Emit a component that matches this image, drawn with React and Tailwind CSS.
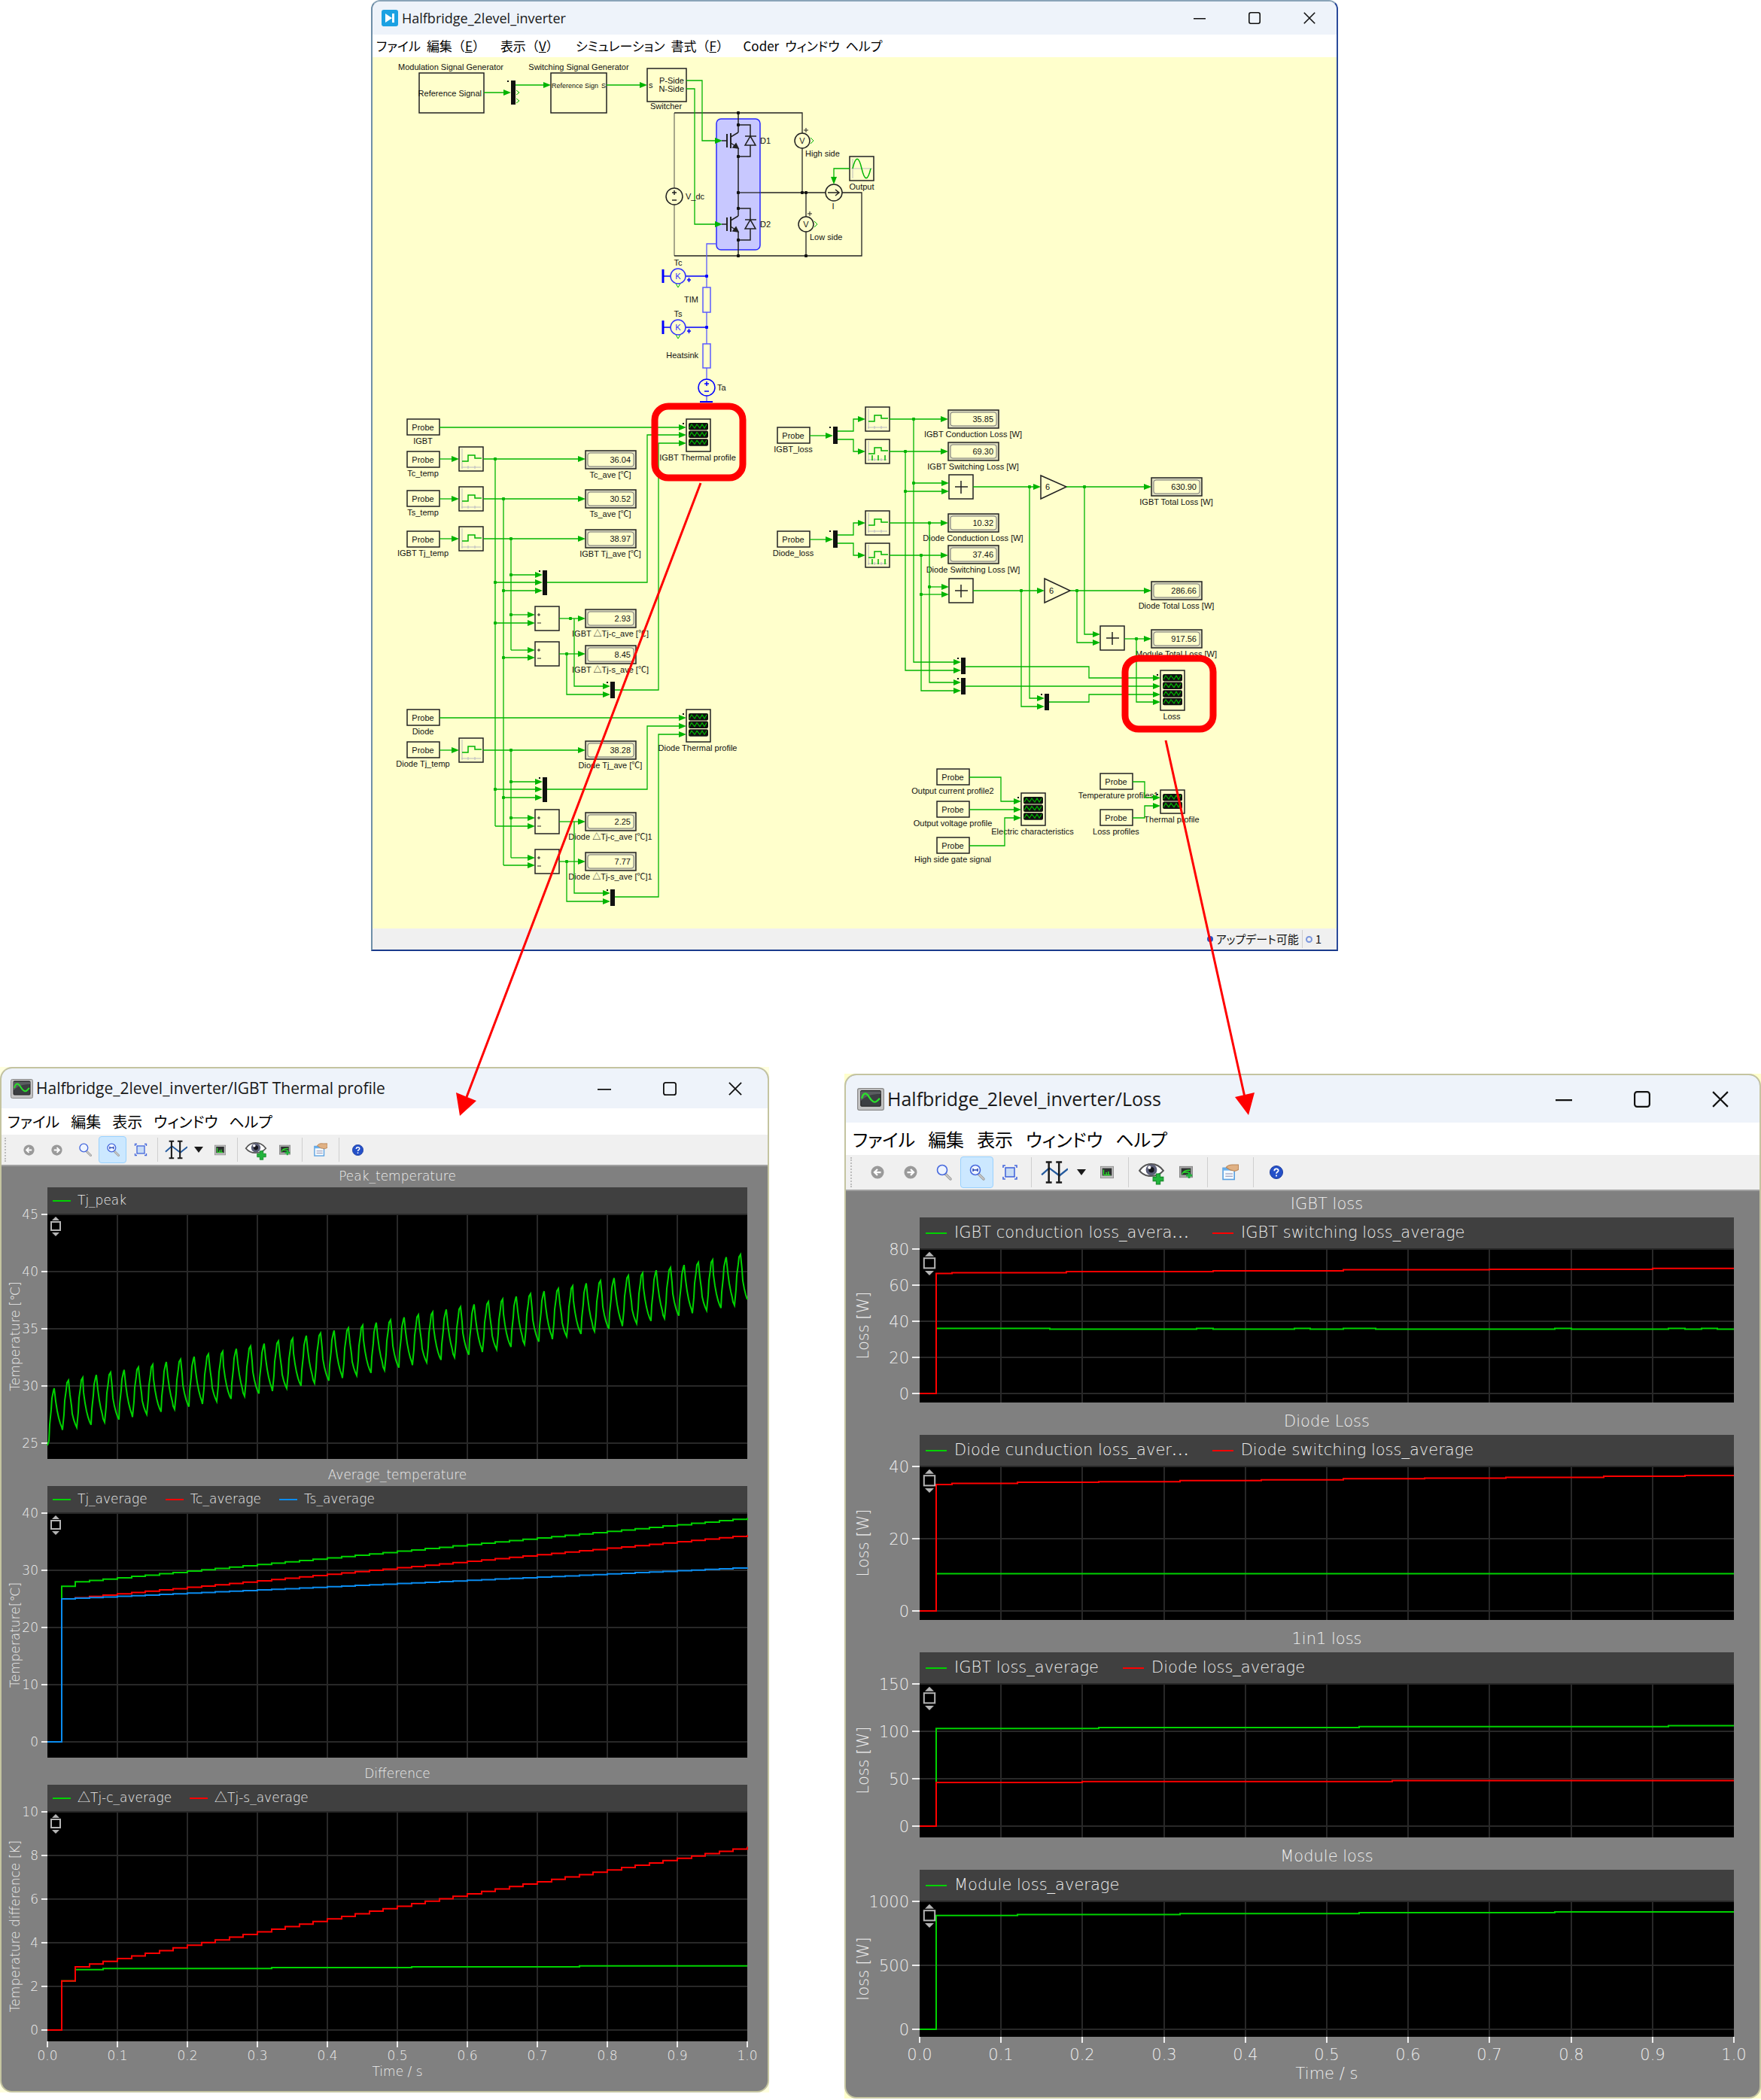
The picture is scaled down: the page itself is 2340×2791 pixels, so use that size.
import React from 'react';

const GREEN = '#00b400';
const BLUE = '#0000ff';
const TIMES = [0, 0.1, 0.2, 0.3, 0.4, 0.5, 0.6, 0.7, 0.8, 0.9, 1];

/* ---------- window chrome ---------- */

function WindowControls({ size, cell }) {
  return (
    <div className="flex items-center">
      <button aria-label="Minimize" className={`${cell} flex justify-center`}>
        <svg className={size} viewBox="0 0 20 20" fill="none" stroke="#111" strokeWidth="2"><path d="M0 11h20" /></svg>
      </button>
      <button aria-label="Maximize" className={`${cell} flex justify-center`}>
        <svg className={size} viewBox="0 0 20 20" fill="none" stroke="#111" strokeWidth="2"><rect x="1" y="1" width="18" height="18" rx="3" /></svg>
      </button>
      <button aria-label="Close" className={`${cell} flex justify-center`}>
        <svg className={size} viewBox="0 0 20 20" fill="none" stroke="#111" strokeWidth="2"><path d="M1 1l18 18M19 1L1 19" /></svg>
      </button>
    </div>
  );
}

function ScopeIcon({ className }) {
  return (
    <svg className={className} viewBox="0 0 30 26" preserveAspectRatio="none">
      <rect x="0.5" y="0.5" width="29" height="25" rx="2" fill="#c4c4c4" stroke="#8a8a8a" />
      <rect x="4" y="3" width="22" height="18" rx="1" fill="#3c3f42" stroke="#222" />
      <path d="M4 11V4h22v3C16 7 10 9 4 15z" fill="#5a5d60" />
      <path d="M5 12C7 5 10 5 13 10s6 8 9 5 2-2 3-3" fill="none" stroke="#2be02b" strokeWidth="2" />
    </svg>
  );
}

/* ---------- scope toolbar ---------- */

const Arrow = ({ flip }) => (
  <svg className="size-1/2" viewBox="0 0 20 20">
    <circle cx="10" cy="10" r="9.5" fill="#9a9a9a" />
    <path d={flip ? 'M5 10h9M10 5.500l4.500 4.500-4.500 4.500' : 'M15 10H6M10 5.500L5.500 10l4.500 4.500'} fill="none" stroke="#fff" strokeWidth="2.500" />
  </svg>
);

const Lens = ({ mark }) => (
  <svg className="size-2/3" viewBox="0 0 24 24" fill="none">
    <path d="M14 14l7 7" stroke="#9a9a9a" strokeWidth="3.500" strokeLinecap="round" />
    <path d="M14 14l7 7" stroke="#d0d0d0" strokeWidth="1.500" strokeLinecap="round" />
    <circle cx="10" cy="9" r="6.500" fill="#eef4ff" stroke="#4668dc" strokeWidth="1.600" />
    {mark && <path d="M7 7v4M13 7v4M7 9h6" stroke="#2846b4" strokeWidth="1.500" />}
  </svg>
);

const FitIcon = () => (
  <svg className="size-2/3" viewBox="0 0 24 24" fill="none" stroke="#4668dc" strokeWidth="1.600">
    <rect x="6" y="6" width="12" height="12" fill="#c8dcf5" />
    <path d="M3 6V3h3M18 3h3v3M21 18v3h-3M6 21H3v-3" />
  </svg>
);

const CursorsIcon = () => (
  <svg className="size-full" viewBox="0 0 32 28" fill="none">
    <path d="M1 17l9-8 12 9 10-8" stroke="#235a9e" strokeWidth="2" />
    <path d="M9.500 2v24M21.500 2v24M6 2h7M18 2h7M6 26h7M18 26h7" stroke="#1a1a1a" strokeWidth="2.200" />
  </svg>
);

const CaretIcon = () => (
  <svg className="h-2 w-3" viewBox="0 0 12 8" preserveAspectRatio="none"><path d="M0 0h12L6 8z" fill="#1a1a1a" /></svg>
);

const SpectrumIcon = () => (
  <svg className="size-1/2" viewBox="0 0 20 20">
    <rect x="0.500" y="1.500" width="19" height="17" fill="#c0c0c0" stroke="#8c8c8c" />
    <rect x="3" y="4" width="14" height="11" fill="#2d3030" />
    <path d="M5 14V6M5 14h10M9 14v-4M12 14V9" stroke="#2be02b" strokeWidth="1.600" />
  </svg>
);

const EyeIcon = () => (
  <svg className="size-full" viewBox="0 0 34 30">
    <path d="M2 13C9 2 24 2 32 13 24 22 9 22 2 13z" fill="#fff" stroke="#555" strokeWidth="2" />
    <circle cx="17" cy="12" r="7" fill="#5c5f78" />
    <circle cx="17" cy="12" r="3.500" fill="#15151c" />
    <circle cx="14.500" cy="9" r="2" fill="#fff" />
    <path d="M23 17h5v4h4v5h-4v4h-5v-4h-4v-5h4z" fill="#22b43c" stroke="#178a2b" />
  </svg>
);

const AddScopeIcon = () => (
  <svg className="size-1/2" viewBox="0 0 20 20">
    <rect x="0.500" y="1.500" width="19" height="16" fill="#a8a8a8" stroke="#808080" />
    <rect x="3" y="4" width="14" height="10" fill="#2d3030" />
    <path d="M4 13c2-5 5-6 12-6M5 10h9" stroke="#2be02b" strokeWidth="1.600" fill="none" />
    <path d="M13 10h3v3h3v3h-3v3h-3v-3h-3v-3h3z" fill="#22b43c" />
  </svg>
);

const NotesIcon = () => (
  <svg className="size-3/5" viewBox="0 0 20 20">
    <rect x="1" y="5" width="14" height="14" fill="#f4faff" stroke="#5aa0e0" strokeWidth="1.500" />
    <rect x="1" y="5" width="14" height="3" fill="#6ab0ec" />
    <path d="M4 12h9M4 15h9" stroke="#88a" strokeWidth="1" />
    <path d="M5 4c3-4 7-3 10-3h5v6c-4 2-5 2-7 1-3 0-4-1-8-4z" fill="#e0b184" stroke="#b98556" />
  </svg>
);

const HelpIcon = () => (
  <svg className="size-1/2" viewBox="0 0 20 20">
    <circle cx="10" cy="10" r="9.500" fill="#2450c8" stroke="#18389a" />
    <path d="M7 8c0-4 6-4 6-0.500 0 2-3 2-3 4.500M10 14v2" fill="none" stroke="#fff" strokeWidth="2" />
  </svg>
);

function Toolbar({ large }) {
  const btn = large ? 'h-[42px] w-11' : 'h-9 w-[37px]';
  const box = large ? 'size-9' : 'size-[30px]';
  const wide = large ? 'h-[42px] w-12' : 'h-9 w-10';
  const arrow = large ? 'h-[42px] w-6' : 'h-9 w-5';
  const tool = (label, icon, cls = btn, active = false) => (
    <button
      aria-label={label}
      className={`${cls} flex shrink-0 items-center justify-center rounded-sm ${active ? 'border border-[#99d1ff] bg-[#cce8ff]' : ''}`}
    >
      <span className={`${box} flex shrink-0 items-center justify-center`}>{icon}</span>
    </button>
  );
  const sep = <span className={`${large ? 'mx-[6px] h-10' : 'mx-1 h-8'} w-px bg-[#cfcfcf]`} />;
  return (
    <div className={`flex items-center border-b-2 border-[#a0a0a0] bg-[#f0f0f0] ${large ? 'h-12 pl-[6px]' : 'h-[42px] pl-1'}`}>
      <span className={`${large ? 'mr-3 h-10' : 'mr-3 h-8'} border-l-2 border-dotted border-[#bdbdbd]`} />
      {tool('Back', <Arrow />)}
      {tool('Forward', <Arrow flip />)}
      {tool('Zoom', <Lens />)}
      {tool('Horizontal zoom', <Lens mark />, btn, true)}
      {tool('Fit', <FitIcon />)}
      {sep}
      {tool('Cursors', <CursorsIcon />, wide)}
      {tool('Cursor options', <CaretIcon />, arrow)}
      {tool('Spectrum', <SpectrumIcon />)}
      {sep}
      {tool('Show trace', <EyeIcon />, wide)}
      {tool('Hold trace', <AddScopeIcon />)}
      {sep}
      {tool('Properties', <NotesIcon />, wide)}
      {sep}
      {tool('Help', <HelpIcon />, wide)}
    </div>
  );
}

/* ---------- charts ---------- */

// turns [[t, value], ...] into a staircase that holds each value up to the next time
function staircase(points, px, py) {
  let d = '';
  points.forEach(([t, v], i) => {
    d += i === 0 ? `M${px(t)} ${py(v)}` : `H${px(t)}V${py(v)}`;
  });
  return `${d}H${px(1)}`;
}

function ramp(first, fn) {
  const pts = [[0, 0], [0.02, first]];
  for (let k = 2; k <= 50; k += 1) pts.push([k / 50, fn(k / 50)]);
  return pts;
}

// temperature ripple, one heating pulse every 20 ms
function ripple(px, py) {
  let d = `M${px(0)} ${py(24.8)}L${px(0.002)} ${py(25.2)}`;
  for (let k = 0; k < 50; k += 1) {
    const low = k === 0 ? 25.2 : 26.15 + (k - 1) * 0.227;
    const high = k === 0 ? 29.8 : 30.5 + (k - 1) * 0.229;
    const next = 26.15 + k * 0.227;
    for (let i = 1; i <= 5; i += 1) {
      const s = i / 5;
      d += `L${px(k / 50 + 0.002 + 0.008 * s)} ${py(low + (high - low) * Math.sin((s * Math.PI) / 2))}`;
    }
    for (let i = 1; i <= 6; i += 1) {
      const t = k / 50 + 0.01 + 0.002 * i;
      if (t > 1) break;
      const fall = (1 - Math.exp(-0.3 * i)) / (1 - Math.exp(-1.8));
      d += `L${px(t)} ${py(high - (high - next) * fall)}`;
    }
  }
  return d;
}

function Chart({ chart, dim, last, first }) {
  const { w, x0, x1, legendClass, gridClass, font, titleClass } = dim;
  const top = 1;
  const bottom = chart.height;
  const px = (t) => Math.round(x0 + t * (x1 - x0));
  const py = (v) => Math.round(10 * (top + ((chart.max - v) / chart.step) * chart.stepPx)) / 10;
  const total = last ? bottom + dim.tail : bottom;
  const hx = x0 + dim.handle;
  const u = dim.unit;
  return (
    <section className={`grid ${gridClass} ${first ? '' : 'pt-2'} text-[#eeeeee]`}>
      <h2 className={`col-start-2 flex items-center justify-center ${titleClass}`}>{chart.title}</h2>
      <ul className={`col-start-2 flex items-center bg-[#404040] ${legendClass}`}>
        {chart.series.map((s) => (
          <li key={s.name} className={`flex items-center whitespace-nowrap ${dim.itemClass}`}>
            <span className={`h-[2px] ${dim.swatchClass}`} style={{ backgroundColor: s.color }} />
            {s.name}
          </li>
        ))}
      </ul>
      <svg className="col-span-3 w-full overflow-visible" viewBox={`0 0 ${w} ${total}`} fontSize={font} fill="#eeeeee">
        <rect x={x0} y="0" width={x1 - x0} height={bottom} fill="#000" />
        <g stroke="#282828" strokeWidth="2">
          {TIMES.slice(1, 10).map((t) => <path key={t} d={`M${px(t)} 0V${bottom}`} />)}
          {chart.ticks.map((v) => <path key={v} d={`M${x0} ${py(v)}H${x1}`} />)}
        </g>
        {chart.ticks.map((v) => (
          <g key={v}>
            <path d={`M${x0 - dim.tick} ${py(v)}H${x0}`} stroke="#eee" strokeWidth="2" />
            <text x={x0 - dim.tick - 4} y={py(v) + font * 0.36} textAnchor="end">{v}</text>
          </g>
        ))}
        <text transform={`translate(${dim.labelX} ${bottom / 2}) rotate(-90)`} textAnchor="middle">{chart.label}</text>
        {chart.series.map((s) => (
          <path
            key={s.name}
            d={s.points ? staircase(s.points, px, py) : ripple(px, py)}
            fill="none"
            stroke={s.color}
            strokeWidth="2"
          />
        ))}
        <g fill="#b4b4b4">
          <path d={`M${hx} ${4 * u}l${5 * u} ${5 * u}h${-10 * u}z`} />
          <rect x={hx - 6 * u} y={11 * u} width={12 * u} height={11 * u} fill="#000" stroke="#b4b4b4" strokeWidth="2" />
          <path d={`M${hx} ${30 * u}l${5 * u} ${-5 * u}h${-10 * u}z`} />
        </g>
        {last && (
          <>
            {TIMES.map((t) => (
              <g key={t}>
                <path d={`M${px(t)} ${bottom}v8`} stroke="#eee" strokeWidth="2" />
                <text x={px(t)} y={bottom + dim.timeY} textAnchor="middle">{t.toFixed(1)}</text>
              </g>
            ))}
            <text x={(x0 + x1) / 2} y={bottom + dim.captionY} textAnchor="middle">Time / s</text>
          </>
        )}
      </svg>
    </section>
  );
}

const G = '#00d200';
const R = '#ff0000';
const B = '#0a8cf0';

const thermalDim = {
  w: 1018, x0: 61, x1: 991, font: 17, tick: 8, labelX: 24, handle: 11, unit: 1, timeY: 25, captionY: 46, tail: 66,
  gridClass: 'grid-cols-[61fr_930fr_27fr]',
  titleClass: 'h-7 text-[17px]',
  legendClass: 'h-[35px] gap-6 pl-[7px] text-[17px]',
  itemClass: 'gap-[9px]',
  swatchClass: 'w-6',
};

const thermalCharts = [
  {
    title: 'Peak_temperature', label: 'Temperature [℃]', height: 326, max: 45, step: 5, stepPx: 76,
    ticks: [45, 40, 35, 30, 25],
    series: [{ name: 'Tj_peak', color: G }],
  },
  {
    title: 'Average_temperature', label: 'Temperature[℃]', height: 326, max: 40, step: 10, stepPx: 76,
    ticks: [40, 30, 20, 10, 0],
    series: [
      { name: 'Tj_average', color: G, points: ramp(27.2, (t) => 28 + 11.6 * (t - 0.04)) },
      { name: 'Tc_average', color: R, points: ramp(25, (t) => 25.2 + 11.4 * (t - 0.04)) },
      { name: 'Ts_average', color: B, points: ramp(25, (t) => 25 + 5.6 * (t - 0.02)) },
    ],
  },
  {
    title: 'Difference', label: 'Temperature difference [K]', height: 306, max: 10, step: 2, stepPx: 58,
    ticks: [10, 8, 6, 4, 2, 0],
    series: [
      { name: '△Tj-c_average', color: G, points: [[0, 0], [0.02, 2.25], [0.04, 2.77], [0.08, 2.82], [0.32, 2.86], [0.52, 2.9], [0.76, 2.94]] },
      { name: '△Tj-s_average', color: R, points: ramp(2.25, (t) => 2.88 + 5.75 * (t - 0.04) + 0.15 * Math.sin(Math.PI * t)) },
    ],
  },
];

const lossDim = {
  w: 1214, x0: 98, x1: 1180, font: 21, tick: 10, labelX: 30, handle: 13, unit: 1.2, timeY: 31, captionY: 56, tail: 80,
  gridClass: 'grid-cols-[98fr_1082fr_34fr]',
  titleClass: 'h-[35px] text-[21px]',
  legendClass: 'h-[41px] gap-8 pl-2 text-[21px]',
  itemClass: 'gap-[10px]',
  swatchClass: 'w-7',
};

const lossCharts = [
  {
    title: 'IGBT loss', label: 'Loss [W]', height: 205, max: 80, step: 20, stepPx: 48,
    ticks: [80, 60, 40, 20, 0],
    series: [
      {
        name: 'IGBT conduction loss_avera⋯', color: G,
        points: [[0.02, 36], [0.16, 35.6], [0.34, 36], [0.36, 35.6], [0.46, 36], [0.48, 35.6], [0.52, 36], [0.56, 35.6],
          [0.78, 36], [0.8, 35.6], [0.92, 36], [0.94, 35.6], [0.96, 36], [0.98, 35.6]],
      },
      {
        name: 'IGBT switching loss_average', color: R,
        points: [[0, 0], [0.02, 66.4], [0.04, 66.9], [0.18, 67.5], [0.36, 67.9], [0.52, 68.5], [0.7, 68.8], [0.9, 69.3]],
      },
    ],
  },
  {
    title: 'Diode Loss', label: 'Loss [W]', height: 205, max: 40, step: 20, stepPx: 96,
    ticks: [40, 20, 0],
    series: [
      { name: 'Diode cunduction loss_aver⋯', color: G, points: [[0.02, 10.3]] },
      {
        name: 'Diode switching loss_average', color: R,
        points: [[0, 0], [0.02, 35], [0.04, 35.3], [0.12, 35.6], [0.22, 35.8], [0.32, 36.1], [0.42, 36.3], [0.52, 36.6],
          [0.62, 36.8], [0.72, 37], [0.84, 37.3], [0.94, 37.5]],
      },
    ],
  },
  {
    title: '1in1 loss', label: 'Loss [W]', height: 205, max: 150, step: 50, stepPx: 63,
    ticks: [150, 100, 50, 0],
    series: [
      { name: 'IGBT loss_average', color: G, points: [[0, 0], [0.02, 103], [0.22, 104], [0.54, 105], [0.92, 106]] },
      { name: 'Diode loss_average', color: R, points: [[0, 0], [0.02, 46], [0.2, 47], [0.58, 48]] },
    ],
  },
  {
    title: 'Module loss', label: 'loss [W]', height: 181, max: 1000, step: 500, stepPx: 85,
    ticks: [1000, 500, 0],
    series: [
      { name: 'Module loss_average', color: G, points: [[0, 0], [0.02, 890], [0.12, 897], [0.32, 905], [0.54, 912], [0.78, 918]] },
    ],
  },
];

function ScopeWindow({ title, charts, dim, large }) {
  return (
    <div className="overflow-hidden rounded-2xl border-2 border-[#c4c4a0] bg-[#808080]">
      <header className={`flex items-center bg-[#eef3fa] ${large ? 'h-[63px] pl-[15px]' : 'h-[53px] pl-3'}`}>
        <ScopeIcon className={large ? 'h-[30px] w-9' : 'h-[26px] w-[30px]'} />
        <h1 className={`flex-1 whitespace-nowrap pl-1 font-['Open_Sans',sans-serif] text-[#191919] ${large ? 'text-[25px]' : 'text-[21px]'}`}>{title}</h1>
        <WindowControls size={large ? 'size-[22px]' : 'size-[18px]'} cell={large ? 'w-[104px]' : 'w-[87px]'} />
      </header>
      <nav className={`flex items-center bg-white font-['Noto_Sans_CJK_JP',sans-serif] text-black [font-feature-settings:'palt'] ${large ? 'h-[43px] gap-[17px] pl-[9px] text-[24px]' : 'h-[35px] gap-[15px] pl-2 text-[20px]'}`}>
        {['ファイル', '編集', '表示', 'ウィンドウ', 'ヘルプ'].map((m) => <button key={m} className="whitespace-nowrap">{m}</button>)}
      </nav>
      <Toolbar large={large} />
      <div className="font-['DejaVu_Sans','Noto_Sans_CJK_JP',sans-serif] font-extralight">
        {charts.map((c, i) => (
          <Chart key={c.title} chart={c} dim={dim} first={i === 0} last={i === charts.length - 1} />
        ))}
      </div>
    </div>
  );
}

/* ---------- schematic ---------- */

const Label = ({ x, y, children, anchor = 'middle', size }) => <text x={x} y={y} textAnchor={anchor} fontSize={size}>{children}</text>;

const Box = ({ x, y, w = 32, h = 32 }) => <rect x={x} y={y} width={w} height={h} fill="#ffffcc" stroke="#222" strokeWidth="1.500" />;

const Dots = ({ at, color = GREEN, r = 2 }) => at.map(([x, y]) => <rect key={`${x},${y}`} x={x - r} y={y - r} width={2 * r} height={2 * r} rx="1" fill={color} />);

const Wire = ({ d, color = GREEN }) => <path d={d} fill="none" stroke={color} strokeWidth="1.300" />;

// signal line that ends in an arrow head pointing right at (x, y)
function Signal({ d, x, y }) {
  return (
    <>
      <Wire d={`${d}H${x - 6}`} />
      <path d={`M${x} ${y}l-10 -4v8z`} fill={GREEN} />
    </>
  );
}

function Probe({ x, y, label, cx }) {
  return (
    <>
      <Box x={x} y={y} w={43} h={21} />
      <Label x={x + 21} y={y + 15}>Probe</Label>
      <Label x={cx || x + 21} y={y + 33}>{label}</Label>
    </>
  );
}

function Average({ x, y, pulses }) {
  return (
    <>
      <Box x={x} y={y} />
      <path d={`M${x + 4} ${y + 2}v27M${x + 3} ${y + 27}h26M${x + 12} ${y + 25}v4M${x + 21} ${y + 25}v4`} stroke="#b8b8c0" fill="none" />
      <path d={`M${x + 4} ${y + 19}h8v-8h9v4h9`} stroke={GREEN} strokeWidth="1.500" fill="none" />
      {pulses && <path d={`M${x + 9} ${y + 28}v-7M${x + 17} ${y + 28}v-7M${x + 26} ${y + 28}v-7`} stroke={GREEN} strokeWidth="1.500" />}
    </>
  );
}

function Display({ x, y, value, label }) {
  return (
    <>
      <rect x={x} y={y} width="67" height="24" fill="#dcdcbe" stroke="#222" strokeWidth="1.500" />
      <rect x={x + 3} y={y + 3} width="61" height="18" rx="3" fill="#ffffcc" stroke="#777" />
      <Label x={x + 60} y={y + 16} anchor="end">{value}</Label>
      <Label x={x + 33} y={y + 36}>{label}</Label>
    </>
  );
}

const Mux = ({ x, y, h = 22 }) => (
  <>
    <rect x={x} y={y} width="6" height={h} />
    <rect x={x - 5} y={y} width="2" height="2" />
  </>
);

function Difference({ x, y }) {
  return (
    <>
      <Box x={x} y={y} />
      <path d={`M${x + 3} ${y + 11}h4M${x + 5} ${y + 9}v4M${x + 3} ${y + 22}h5`} stroke="#222" />
    </>
  );
}

function Sum({ x, y }) {
  return (
    <>
      <Box x={x} y={y} />
      <path d={`M${x + 8} ${y + 16}h17M${x + 16} ${y + 8}v17`} stroke="#222" strokeWidth="1.500" />
    </>
  );
}

function Scope({ x, y, rows, h, label, pad = 5 }) {
  return (
    <>
      <Box x={x} y={y} h={h} />
      {Array.from({ length: rows }, (_, i) => (
        <g key={i}>
          <rect x={x + 3} y={y + pad + i * 10.6} width="26" height="9.500" rx="2" />
          <path
            d={`M${x + 4} ${y + pad + 7 + i * 10.6}l3 -5l4 5l3 -5l4 5l3 -5l3 5l3 -5`}
            fill="none"
            stroke={GREEN}
            strokeWidth="1.200"
          />
        </g>
      ))}
      <rect x={x - 5} y={y + pad} width="2" height="2" />
      <Label x={x + 15} y={y + h + 12}>{label}</Label>
    </>
  );
}

// transistor with its anti-parallel diode; (x, y) is the gate level on the main line
function Igbt({ x, y }) {
  return (
    <g stroke="#222" strokeWidth="1.500" fill="none">
      <path d={`M${x - 22} ${y}h7`} />
      <path d={`M${x - 15} ${y - 9}v18M${x - 10} ${y - 10}v20`} strokeWidth="2" />
      <path d={`M${x - 10} ${y - 5}L${x} ${y - 11}M${x - 10} ${y + 3}L${x} ${y + 10}`} />
      <path d={`M${x} ${y + 10}l-7 -1l4 -5z`} fill="#222" />
      <path d={`M${x} ${y - 21}h16v42h-16M${x + 9} ${y - 6}h15`} />
      <path d={`M${x + 16} ${y - 6}l7 12h-14z`} fill="#c8c8ff" />
    </g>
  );
}

function Meter({ x, y, letter, color = '#222' }) {
  return (
    <>
      <circle cx={x} cy={y} r="10" fill="#ffffcc" stroke={color} strokeWidth="1.500" />
      <text x={x} y={y + 4} textAnchor="middle" fill={color}>{letter}</text>
    </>
  );
}

function ThermalMeter({ y, label }) {
  return (
    <>
      <path d={`M881 ${y - 9}v18`} stroke={BLUE} strokeWidth="3" />
      <path d={`M881 ${y}H939M913 ${y + 5}h5M915.500 ${y + 2}v6`} stroke={BLUE} strokeWidth="1.500" />
      <Meter x={901} y={y} letter="K" color="#3232ff" />
      <path d={`M898 ${y + 10}l3 5l3 -5`} fill="none" stroke={GREEN} />
      <Label x={901} y={y - 14}>{label}</Label>
      <Dots at={[[939, y]]} color={BLUE} />
    </>
  );
}

function PowerStage() {
  return (
    <>
      <Label x={599} y={93}>Modulation Signal Generator</Label>
      <Box x={557} y={97} w={86} h={53} />
      <Label x={640} y={128} anchor="end">Reference Signal</Label>
      <Signal d="M643 123" x={679} y={123} />
      <Mux x={679} y={107} h={32} />
      <path d="M686 120l4 3l-4 3M686 131l4 3l-4 3" fill="none" stroke={GREEN} />
      <Signal d="M685 113" x={732} y={113} />
      <Label x={769} y={93}>Switching Signal Generator</Label>
      <Box x={732} y={97} w={74} h={53} />
      <Label x={733} y={117} anchor="start" size={9}>Reference Sign</Label>
      <Label x={805} y={117} anchor="end" size={9}>S</Label>
      <Signal d="M806 113" x={860} y={113} />
      <Box x={860} y={91} w={52} h={44} />
      <Label x={862} y={117} anchor="start">s</Label>
      <Label x={909} y={111} anchor="end">P-Side</Label>
      <Label x={909} y={122} anchor="end">N-Side</Label>
      <Label x={885} y={145}>Switcher</Label>

      <path d="M896 150V340" stroke="#777766" strokeWidth="1.300" />
      <Wire color="#222" d="M896 150H1066V255M896 340H1145V256H981M1071 256V340" />
      <rect x="952" y="158" width="58" height="174" rx="6" fill="#c8c8ff" stroke="#2828ff" strokeWidth="1.500" />
      <Wire color="#222" d="M981 256H1010" />
      <path d="M981 150V176M981 197V287M981 308V340" stroke="#222" strokeWidth="1.500" />
      <Igbt x={981} y={187} />
      <Igbt x={981} y={298} />
      <Dots color="#111" at={[[981, 150], [981, 166], [981, 208], [981, 256], [981, 277], [981, 319], [981, 340], [1066, 256], [1071, 256], [1071, 340]]} />
      <Signal d="M912 107H933V187" x={960} y={187} />
      <Signal d="M912 118H923V298" x={960} y={298} />
      <Label x={1010} y={191} anchor="start">D1</Label>
      <Label x={1010} y={302} anchor="start">D2</Label>

      <circle cx="896" cy="261" r="11" fill="#ffffcc" stroke="#222" strokeWidth="1.500" />
      <path d="M893 256h6M896 253v6M893 266h6" stroke="#222" strokeWidth="1.500" />
      <Label x={911} y={265} anchor="start">V_dc</Label>
      <Meter x={1066} y={187} letter="V" />
      <Meter x={1071} y={298} letter="V" />
      <path d="M1077 183l4 4l-4 4M1082 294l4 4l-4 4" fill="none" stroke={GREEN} />
      <path d="M1068 173h6M1071 170v6M1073 284h6M1076 281v6" stroke="#222" />
      <Label x={1070} y={208} anchor="start">High side</Label>
      <Label x={1076} y={319} anchor="start">Low side</Label>
      <circle cx="1108" cy="256" r="11" fill="#ffffcc" stroke="#222" strokeWidth="1.500" />
      <path d="M1100 256h15M1110 252l5 4l-5 4" fill="none" stroke="#222" strokeWidth="1.500" />
      <Label x={1107} y={278}>I</Label>
      <Box x={1129} y={208} />
      <path d="M1133 211v26M1131 224h28" stroke="#bbb" />
      <path d="M1133 224c4-17 8-17 12 0s8 17 12 0" fill="none" stroke={GREEN} strokeWidth="1.500" />
      <Wire d="M1129 224H1108V236" />
      <path d="M1108 245l-4 -10h8z" fill={GREEN} />
      <Label x={1145} y={252}>Output</Label>

      <Wire color="#5a5aff" d="M952 324H939V534" />
      <rect x="934" y="382" width="10" height="33" fill="#ffffcc" stroke="#5a5aff" strokeWidth="1.500" />
      <rect x="934" y="457" width="10" height="32" fill="#ffffcc" stroke="#5a5aff" strokeWidth="1.500" />
      <ThermalMeter y={367} label="Tc" />
      <ThermalMeter y={435} label="Ts" />
      <Label x={928} y={402} anchor="end">TIM</Label>
      <Label x={928} y={476} anchor="end">Heatsink</Label>
      <circle cx="939" cy="515" r="11" fill="#ffffcc" stroke={BLUE} strokeWidth="1.500" />
      <path d="M936 510h6M939 507v6M936 520h6" stroke={BLUE} strokeWidth="1.500" />
      <path d="M930 534h17" stroke={BLUE} strokeWidth="2" />
      <Label x={953} y={519} anchor="start">Ta</Label>
    </>
  );
}

function ThermalPart() {
  return (
    <>
      <Wire d="M658 610V1098M669 663V1150M679 716V864M679 997V1140" />
      <Probe x={541} y={557} label="IGBT" />
      <Probe x={541} y={600} label="Tc_temp" />
      <Probe x={541} y={652} label="Ts_temp" />
      <Probe x={541} y={706} label="IGBT Tj_temp" />
      <Probe x={541} y={943} label="Diode" />
      <Probe x={541} y={986} label="Diode Tj_temp" />
      <Signal d="M584 568" x={912} y={568} />
      <Signal d="M584 954" x={912} y={954} />
      {[610, 663, 716, 997].map((y) => (
        <g key={y}>
          <Signal d={`M584 ${y}`} x={610} y={y} />
          <Average x={610} y={y - 16} />
          <Signal d={`M642 ${y}`} x={778} y={y} />
        </g>
      ))}
      <Display x={778} y={599} value="36.04" label="Tc_ave [℃]" />
      <Display x={778} y={651} value="30.52" label="Ts_ave [℃]" />
      <Display x={778} y={704} value="38.97" label="IGBT Tj_ave [℃]" />
      <Display x={778} y={985} value="38.28" label="Diode Tj_ave [℃]" />

      {[764, 1039].map((y) => (
        <g key={y}>
          <Signal d={`M679 ${y}`} x={721} y={y} />
          <Signal d={`M658 ${y + 10}`} x={721} y={y + 10} />
          <Signal d={`M669 ${y + 21}`} x={721} y={y + 21} />
          <Mux x={721} y={y - 6} h={33} />
          <Dots at={[[679, y], [658, y + 10], [669, y + 21]]} />
        </g>
      ))}
      <Signal d="M727 774H860V578" x={912} y={578} />
      <Signal d="M727 1049H860V965" x={912} y={965} />

      {[[806, 853], [1076, 1129]].map(([a, b]) => (
        <g key={a}>
          <Signal d={`M679 ${a + 11}`} x={711} y={a + 11} />
          <Signal d={`M658 ${a + 22}`} x={711} y={a + 22} />
          <Signal d={`M679 ${b + 11}`} x={711} y={b + 11} />
          <Signal d={`M669 ${b + 21}`} x={711} y={b + 21} />
          <Difference x={711} y={a} />
          <Difference x={711} y={b} />
          <Signal d={`M743 ${a + 16}`} x={778} y={a + 16} />
          <Signal d={`M743 ${b + 16}`} x={778} y={b + 16} />
          <Dots at={[[679, a + 11], [753, b + 16]]} />
        </g>
      ))}
      <Dots at={[[658, 610], [669, 663], [679, 716], [679, 997], [658, 828], [669, 874], [758, 822]]} />
      <Display x={778} y={810} value="2.93" label="IGBT △Tj-c_ave [℃]" />
      <Display x={778} y={858} value="8.45" label="IGBT △Tj-s_ave [℃]" />
      <Display x={778} y={1080} value="2.25" label="Diode △Tj-c_ave [℃]1" />
      <Display x={778} y={1133} value="7.77" label="Diode △Tj-s_ave [℃]1" />
      <Signal d="M763 822V912" x={811} y={912} />
      <Signal d="M753 869V923" x={811} y={923} />
      <Mux x={811} y={906} />
      <Signal d="M817 917H875V589" x={912} y={589} />
      <Signal d="M763 1092V1187" x={811} y={1187} />
      <Signal d="M753 1145V1198" x={811} y={1198} />
      <Mux x={811} y={1182} />
      <Signal d="M817 1192H875V976" x={912} y={976} />
      <Scope x={912} y={557} h={43} rows={3} label="IGBT Thermal profile" />
      <Scope x={912} y={943} h={43} rows={3} label="Diode Thermal profile" />
    </>
  );
}

function LossPart() {
  return (
    <>
      {[[579, 'IGBT_loss'], [717, 'Diode_loss']].map(([y, label]) => (
        <g key={label}>
          <Probe x={1033} y={y - 11} label={label} />
          <Signal d={`M1076 ${y}`} x={1107} y={y} />
          <Mux x={1107} y={y - 12} h={23} />
          <Signal d={`M1113 ${y - 6}H1134V${y - 22}`} x={1150} y={y - 22} />
          <Signal d={`M1113 ${y + 5}H1134V${y + 21}`} x={1150} y={y + 21} />
          <Average x={1150} y={y - 38} />
          <Average x={1150} y={y + 5} pulses />
          <Signal d={`M1182 ${y - 22}`} x={1260} y={y - 22} />
          <Signal d={`M1182 ${y + 21}`} x={1260} y={y + 21} />
        </g>
      ))}
      <Display x={1260} y={545} value="35.85" label="IGBT Conduction Loss [W]" />
      <Display x={1260} y={588} value="69.30" label="IGBT Switching Loss [W]" />
      <Display x={1260} y={683} value="10.32" label="Diode Conduction Loss [W]" />
      <Display x={1260} y={725} value="37.46" label="Diode Switching Loss [W]" />

      <Signal d="M1214 642" x={1261} y={642} />
      <Signal d="M1203 653" x={1261} y={653} />
      <Sum x={1261} y={631} />
      <Signal d="M1293 647" x={1383} y={647} />
      <path d="M1383 632v31l34 -16z" fill="#ffffcc" stroke="#222" strokeWidth="1.500" />
      <Label x={1392} y={651}>6</Label>
      <Signal d="M1417 647" x={1530} y={647} />
      <Display x={1530} y={635} value="630.90" label="IGBT Total Loss [W]" />

      <Signal d="M1235 780" x={1261} y={780} />
      <Signal d="M1224 790" x={1261} y={790} />
      <Sum x={1261} y={769} />
      <Signal d="M1293 785" x={1388} y={785} />
      <path d="M1388 769v32l34 -16z" fill="#ffffcc" stroke="#222" strokeWidth="1.500" />
      <Label x={1397} y={789}>6</Label>
      <Signal d="M1422 785" x={1530} y={785} />
      <Display x={1530} y={773} value="286.66" label="Diode Total Loss [W]" />

      <Signal d="M1441 647V843" x={1462} y={843} />
      <Signal d="M1431 785V854" x={1462} y={854} />
      <Sum x={1462} y={832} />
      <Signal d="M1494 849" x={1530} y={849} />
      <Display x={1530} y={837} value="917.56" label="Module Total Loss [W]" />

      <Signal d="M1214 557V880" x={1277} y={880} />
      <Signal d="M1203 600V891" x={1277} y={891} />
      <Signal d="M1235 695V907" x={1277} y={907} />
      <Signal d="M1224 738V918" x={1277} y={918} />
      <Signal d="M1368 647V928" x={1388} y={928} />
      <Signal d="M1357 785V939" x={1388} y={939} />
      <Mux x={1277} y={874} />
      <Mux x={1277} y={901} />
      <Mux x={1388} y={922} />
      <Signal d="M1283 886H1447V901" x={1542} y={901} />
      <Signal d="M1283 912" x={1542} y={912} />
      <Signal d="M1394 933H1447V923" x={1542} y={923} />
      <Signal d="M1510 849V933" x={1542} y={933} />
      <Scope x={1542} y={891} h={53} rows={4} label="Loss" />
      <Dots at={[[1214, 557], [1203, 600], [1214, 642], [1203, 653], [1368, 647], [1441, 647], [1235, 695], [1224, 738], [1235, 780], [1224, 790], [1357, 785], [1431, 785], [1510, 849]]} />

      <Probe x={1245} y={1022} label="Output current profile2" />
      <Probe x={1245} y={1065} label="Output voltage profile" />
      <Probe x={1245} y={1113} label="High side gate signal" />
      <Scope x={1357} y={1054} h={43} rows={3} label="Electric characteristics" />
      <Signal d="M1288 1033H1330V1065" x={1357} y={1065} />
      <Signal d="M1288 1076" x={1357} y={1076} />
      <Signal d="M1288 1124H1335V1087" x={1357} y={1087} />
      <Probe x={1462} y={1028} label="Temperature profiles1" cx={1486} />
      <Probe x={1462} y={1076} label="Loss profiles" />
      <Scope x={1542} y={1050} h={31} rows={2} label="Thermal profile" />
      <Signal d="M1505 1039H1521V1060" x={1542} y={1060} />
      <Signal d="M1505 1087H1521V1071" x={1542} y={1071} />
    </>
  );
}

function ModelWindow() {
  return (
    <div className="overflow-hidden rounded-t-xl border-2 border-t-[#8aa4b8] border-l-[#6f8fa8] border-r-[#2a4a9a] border-b-[#1a3a8c] bg-white">
      <header className="flex h-11 items-center bg-[#eef3fa] pl-3">
        <svg className="h-[22px] w-[22px]" viewBox="0 0 22 22">
          <rect width="22" height="22" rx="3" fill="#1ba1e2" />
          <path d="M5 5l9 6-9 6zM14 5h3v12h-3z" fill="#fff" />
        </svg>
        <h1 className="flex-1 pl-[5px] font-['Open_Sans',sans-serif] text-[18px] text-[#191919]">Halfbridge_2level_inverter</h1>
        <WindowControls size="size-4" cell="w-[73px]" />
      </header>
      <nav className="flex h-[30px] items-center gap-2 pl-[5px] font-['Noto_Sans_CJK_JP',sans-serif] text-[17px] text-black [font-feature-settings:'palt']">
        <button>ファイル</button>
        <button className="w-[90px] whitespace-nowrap text-left [font-feature-settings:normal]">編集（<u>E</u>）</button>
        <button className="w-[92px] whitespace-nowrap text-left [font-feature-settings:normal]">表示（<u>V</u>）</button>
        <button className="whitespace-nowrap">シミュレーション</button>
        <button className="w-[88px] whitespace-nowrap text-left [font-feature-settings:normal]">書式（<u>F</u>）</button>
        <button>Coder</button>
        <button className="whitespace-nowrap">ウィンドウ</button>
        <button>ヘルプ</button>
      </nav>
      <svg
        className="block w-full bg-[#ffffcc] font-['Liberation_Sans','Noto_Sans_CJK_JP',sans-serif]"
        viewBox="495 76 1281 1158"
        fontSize="11"
        fill="#111"
      >
        <PowerStage />
        <ThermalPart />
        <LossPart />
      </svg>
      <footer className="flex h-7 items-center justify-end gap-1 bg-[#f0f0f0] pr-5 font-['Noto_Sans_CJK_JP',sans-serif] text-[15px] text-[#111] [font-feature-settings:'palt']">
        <span className="size-2 rounded-full bg-[#2450c8]" />
        <span>アップデート可能</span>
        <span className="h-6 w-px bg-[#cfcfcf]" />
        <span className="size-[9px] rounded-full border-2 border-[#7a96dc]" />
        <span>1</span>
      </footer>
    </div>
  );
}

// red frames and arrows that tie the scope blocks to their windows
function Callouts() {
  return (
    <svg className="pointer-events-none absolute inset-0 w-full" viewBox="0 0 2340 2791" fill="none" stroke="#ff0000">
      <rect x="870" y="540" width="117" height="95" rx="18" strokeWidth="9" />
      <rect x="1495" y="875" width="117" height="94" rx="18" strokeWidth="9" />
      <path d="M931 642L620 1458M1549 984L1654 1458" strokeWidth="3" />
      <path d="M611 1483l-5 -31l27 11zM1659 1482l-18 -24l26 -6z" fill="#ff0000" stroke="none" />
    </svg>
  );
}

export default function App() {
  return (
    <main className="relative overflow-hidden bg-white">
      <div className="grid grid-cols-[493fr_1285fr_562fr]">
        <div className="col-start-2">
          <ModelWindow />
        </div>
      </div>
      <div className="mt-[154px] grid grid-cols-[1022fr_100fr_1218fr] items-start">
        <div className="bg-[#ffffe0]">
          <ScopeWindow title="Halfbridge_2level_inverter/IGBT Thermal profile" charts={thermalCharts} dim={thermalDim} />
        </div>
        <div className="col-start-3 mt-[9px] bg-[#ffffcc]">
          <ScopeWindow title="Halfbridge_2level_inverter/Loss" charts={lossCharts} dim={lossDim} large />
        </div>
      </div>
      <Callouts />
    </main>
  );
}
